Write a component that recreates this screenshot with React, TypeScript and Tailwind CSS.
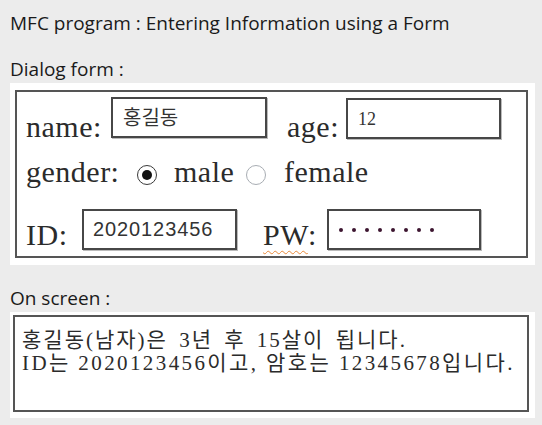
import React from 'react'

const serif = "font-['Liberation_Serif','Noto_Sans_CJK_KR',serif]"

function Radio({ checked }: { checked?: boolean }) {
  return (
    <span
      className={`flex items-center justify-center w-[20px] h-[20px] rounded-full bg-white border-[1.5px] ${
        checked ? 'border-[#3a3a3a]' : 'border-[#a8adb3]'
      }`}
    >
      {checked && <span className="w-[10px] h-[10px] rounded-full bg-[#111]" />}
    </span>
  )
}

function Field({ children, className = '' }: { children?: React.ReactNode; className?: string }) {
  return (
    <div className={`h-[41px] border-2 border-[#474747] bg-white leading-none tracking-normal text-[#333] shadow-[1px_1px_0_#bbb] ${className}`}>
      {children}
    </div>
  )
}

const DialogForm: React.FC = () => {
  return (
    <div className="bg-white pl-[5px] pr-[7px] pt-[7px] pb-[7px]">
      <div className={`h-[168px] border-2 border-[#555] pl-[9px] pt-[5px] text-[#2b2b2b] ${serif} text-[30px] leading-[30px] tracking-[0.5px]`}>
        {/* name / age */}
        <div className="flex items-start h-[60px]">
          <span className="w-[85px] mt-[15px]">name:</span>
          <Field className="w-[156px] pl-[10px] pt-[6px]">
            <span className="block font-['Noto_Sans_CJK_KR',sans-serif] text-[20px] leading-[24px]">홍길동</span>
          </Field>
          <span className="ml-[20px] w-[59px] mt-[15px]">age:</span>
          <Field className="w-[155px] mt-[1px] pl-[10px] pt-[10px]">
            <span className="block text-[18px] leading-[18px]">12</span>
          </Field>
        </div>

        {/* gender */}
        <div className="flex items-start h-[52px]">
          <span className="w-[111px]">gender:</span>
          <span className="mt-[8px]"><Radio checked /></span>
          <span className="ml-[17px] w-[72px]">male</span>
          <span className="mt-[8px]"><Radio /></span>
          <span className="ml-[18px]">female</span>
        </div>

        {/* ID / PW */}
        <div className="flex items-start">
          <span className="w-[56px] mt-[11px]">ID:</span>
          <Field className="w-[155px] h-[39px] pl-[9px] pt-[8px]">
            <span className="block font-['Liberation_Sans',sans-serif] text-[20px] leading-[20px] tracking-[0.9px]">2020123456</span>
          </Field>
          <span className="ml-[26px] w-[64px] mt-[11px]">
            <span className="underline decoration-wavy decoration-[#e8893a] decoration-1 underline-offset-[5px]">PW</span>:
          </span>
          <Field className="w-[154px] h-[40px] flex items-center gap-[9px] pl-[10px]">
            {Array.from({ length: 8 }).map((_, i) => (
              <span key={i} className="w-[4px] h-[4px] rounded-full bg-[#3d1530]" />
            ))}
          </Field>
        </div>
      </div>
    </div>
  )
}

export default function App() {
  return (
    <div className="min-h-[425px] w-full bg-[#ececec] pl-[10px] pr-[7px] pt-[14px] font-['Open_Sans',sans-serif] text-[#1a1a1a]">
      <p className="text-[19px] leading-none">MFC program : Entering Information using a Form</p>
      <p className="mt-[27px] text-[19px] leading-none">Dialog form :</p>
      <div className="mt-[4px]">
        <DialogForm />
      </div>
      <p className="mt-[24px] text-[19px] leading-none">On screen :</p>
      <div className="mt-[4px] bg-white pl-[3px] pt-[3px] pr-[6px] pb-[6px]">
        <div className={`h-[97px] border-2 border-[#555] pl-[7px] pt-[12px] ${serif} text-[21px] leading-[23px] tracking-[2.4px] text-[#2b2b2b]`}>
          <p className="tracking-[2px] [word-spacing:4px]">홍길동(남자)은 3년 후 15살이 됩니다.</p>
          <p>ID는 2020123456이고, 암호는 12345678입니다.</p>
        </div>
      </div>
    </div>
  )
}
